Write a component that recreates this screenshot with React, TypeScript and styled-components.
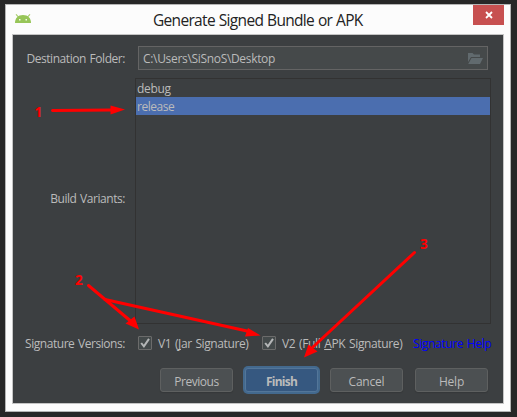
import React from "react";
import styled, { createGlobalStyle, css } from "styled-components";

const GlobalStyle = createGlobalStyle`
  * { box-sizing: border-box; }
  body {
    margin: 0;
    background: #272727;
    font-family: "Open Sans", "Noto Sans", sans-serif;
    font-size: 12px;
    color: #bbbbbb;
    overflow: hidden;
  }
`;

const Desktop = styled.div`
  position: relative;
  width: 517px;
  height: 417px;
  padding: 4px 6px 5px 5px;
  background: #272727;
`;

const Dialog = styled.section`
  display: flex;
  flex-direction: column;
  height: 408px;
  padding: 0 6px 7px;
  border: 1px solid #b4b4b4;
  background: #fcfcfc;
`;

const TitleBar = styled.header`
  display: flex;
  align-items: flex-start;
  height: 29px;
  flex: none;
`;

const AppIcon = styled.svg`
  flex: none;
  width: 16px;
  height: 10px;
  margin: 9px 0 0 3px;
`;

const Title = styled.h1`
  flex: 1;
  margin: 0 0 0 122px;
  font-size: 15.5px;
  font-weight: 400;
  line-height: 30px;
  letter-spacing: -0.68px;
  word-spacing: 0.5px;
  color: #222;
  white-space: nowrap;
`;

const CloseButton = styled.button`
  display: grid;
  place-items: center;
  width: 31px;
  height: 20px;
  padding: 0 0 0 1px;
  border: 0;
  background: #c75050;
`;

const Panel = styled.main`
  display: flex;
  flex-direction: column;
  height: 371px;
  border: 1px solid #c4c4c4;
  background: #3c3f41;
`;

const Row = styled.div<{ $height: number; $top: number }>`
  display: flex;
  align-items: center;
  height: ${(p) => p.$height}px;
  margin-top: ${(p) => p.$top}px;
`;

const Text = styled.span<{ $spacing?: number }>`
  display: inline-block;
  padding-top: 2px;
  white-space: pre;
  letter-spacing: ${(p) => p.$spacing ?? -0.45}px;
  word-spacing: 1px;
  line-height: 18px;
  u { text-underline-offset: 1px; text-decoration-skip-ink: none; }
`;

const FieldLabel = styled.div<{ $lift?: number }>`
  display: flex;
  justify-content: flex-end;
  width: 112px;
  padding-bottom: ${(p) => p.$lift ?? 0}px;
  flex: none;
`;

const PathField = styled.div`
  display: flex;
  align-items: center;
  justify-content: space-between;
  width: 350px;
  height: 24px;
  margin-left: 13px;
  padding: 0 4px;
  border: 1px solid #646464;
  background: #45494a;
`;

const VariantList = styled.ul`
  width: 356px;
  height: 246px;
  margin: 0 0 0 10px;
  padding: 0;
  border: 1px solid #323232;
  list-style: none;
`;

const Variant = styled.li<{ $selected?: boolean }>`
  display: flex;
  align-items: center;
  height: 18px;
  padding-left: 1px;
  background: ${(p) => (p.$selected ? "#4b6eaf" : "transparent")};
`;

const Check = styled.span<{ $left: number }>`
  display: grid;
  place-items: center;
  flex: none;
  width: 14px;
  height: 14px;
  margin: 0 6px 0 ${(p) => p.$left}px;
  border: 1px solid #6b6b6b;
  border-radius: 1px;
  background: #43494a;
`;

const CheckLabel = styled.div<{ $width: number }>`
  width: ${(p) => p.$width}px;
  flex: none;
`;

const HelpLink = styled.a`
  margin-left: 10px;
  color: #0000ff;
`;

const Buttons = styled.footer`
  display: flex;
  align-items: center;
  height: 28px;
  margin: 14px 0 0 147px;
`;

const Button = styled.button<{ $left?: number; $primary?: boolean }>`
  display: flex;
  align-items: center;
  justify-content: center;
  flex: none;
  width: 73px;
  height: 24px;
  margin: 0 0 0 ${(p) => p.$left ?? 0}px;
  padding: 1px 0 0;
  border: 1px solid #5e6060;
  border-radius: 3px;
  background: #4c5052;
  box-shadow: 0 1px 1px #35383a;
  color: #bbbbbb;
  font: inherit;
  ${(p) =>
    p.$primary &&
    css`
      border-color: #537699;
      background: #365880;
      box-shadow: 0 0 0 2px #43698e;
      font-weight: 700;
    `}
`;

const Annotations = styled.svg`
  position: absolute;
  inset: 0;
  width: 517px;
  height: 417px;
  pointer-events: none;
  font: 700 13.5px "Open Sans", "Noto Sans", sans-serif;
`;

const Tick = () => (
  <svg width="12" height="12" viewBox="0 0 12 12" fill="none">
    <path d="M2.2 6 4.9 9.4 10 1.9" stroke="#b4b6b7" strokeWidth="2" />
  </svg>
);

const arrows = [
  { line: "M52.5 110.5 112 110", head: "M110.5 105.5 125 109.5 110.5 114.5Z" },
  { line: "M88.5 285.5 130 320.5", head: "M134.5 316.5 139 329.5 125.5 323.5Z" },
  { line: "M105 299.5 247 331", head: "M248 328 260.5 335.5 245 336.5Z" },
  { line: "M414.5 252.5 313 347", head: "M308.5 344.5 304 357.5 317.5 351.5Z" },
];

export default function App() {
  return (
    <>
      <GlobalStyle />
      <Desktop>
        <Dialog>
          <TitleBar>
            <AppIcon viewBox="0 0 16 10">
              <path d="M1 0.3 3.8 3.3M15 0.3 12.2 3.3" stroke="#a9cf70" strokeWidth="1.1" />
              <path d="M0 9C0 4 3 1 8 1s8 3 8 8Z" fill="#97c558" />
              <path d="M4 5h1.5v1.5H4zM10.5 5H12v1.5h-1.5z" fill="#f4faeb" />
            </AppIcon>
            <Title>Generate Signed Bundle or APK</Title>
            <CloseButton aria-label="Close">
              <svg width="8" height="8" viewBox="0 0 8 8">
                <path d="M1 1 7 7M7 1 1 7" stroke="#fff" strokeWidth="1.8" />
              </svg>
            </CloseButton>
          </TitleBar>
          <Panel>
            <Row $height={24} $top={11}>
              <FieldLabel><Text>Destination Folder:</Text></FieldLabel>
              <PathField>
                <Text $spacing={-0.32}>C:\Users\SiSnoS\Desktop</Text>
                <svg width="16" height="12" viewBox="0 0 16 12" fill="#616a6e">
                  <path d="M1 10V1h4.5l1.5 1.5h6V5H4L1 10Z" />
                  <path d="M4.5 6H16l-3 6H1.2Z" />
                </svg>
              </PathField>
            </Row>
            <Row $height={246} $top={8}>
              <FieldLabel $lift={6}><Text>Build Variants:</Text></FieldLabel>
              <VariantList>
                <Variant><Text $spacing={-0.3}>debug</Text></Variant>
                <Variant $selected><Text>release</Text></Variant>
              </VariantList>
            </Row>
            <Row $height={18} $top={10}>
              <FieldLabel><Text>Signature Versions:</Text></FieldLabel>
              <Check $left={13}><Tick /></Check>
              <CheckLabel $width={104}><Text $spacing={-0.4}>V1 (<u>J</u>ar Signature)</Text></CheckLabel>
              <Check $left={0}><Tick /></Check>
              <CheckLabel $width={121}><Text $spacing={-0.36}>V2 (Full <u>A</u>PK Signature)</Text></CheckLabel>
              <HelpLink><Text $spacing={-0.38}>Signature Help</Text></HelpLink>
            </Row>
            <Buttons>
              <Button><Text>Previous</Text></Button>
              <Button $left={12} $primary><Text $spacing={-0.75}>Finish</Text></Button>
              <Button $left={12}><Text $spacing={-0.2}>Cancel</Text></Button>
              <Button $left={12}><Text $spacing={-0.2}>Help</Text></Button>
            </Buttons>
          </Panel>
        </Dialog>
        <Annotations viewBox="0 0 517 417" fill="#f00">
          {arrows.map((a) => (
            <g key={a.line}>
              <path d={a.line} stroke="#f00" strokeWidth="3" strokeLinecap="round" />
              <path d={a.head} />
            </g>
          ))}
          <text x="34.5" y="117">1</text>
          <text x="75" y="285">2</text>
          <text x="420" y="249">3</text>
        </Annotations>
      </Desktop>
    </>
  );
}
